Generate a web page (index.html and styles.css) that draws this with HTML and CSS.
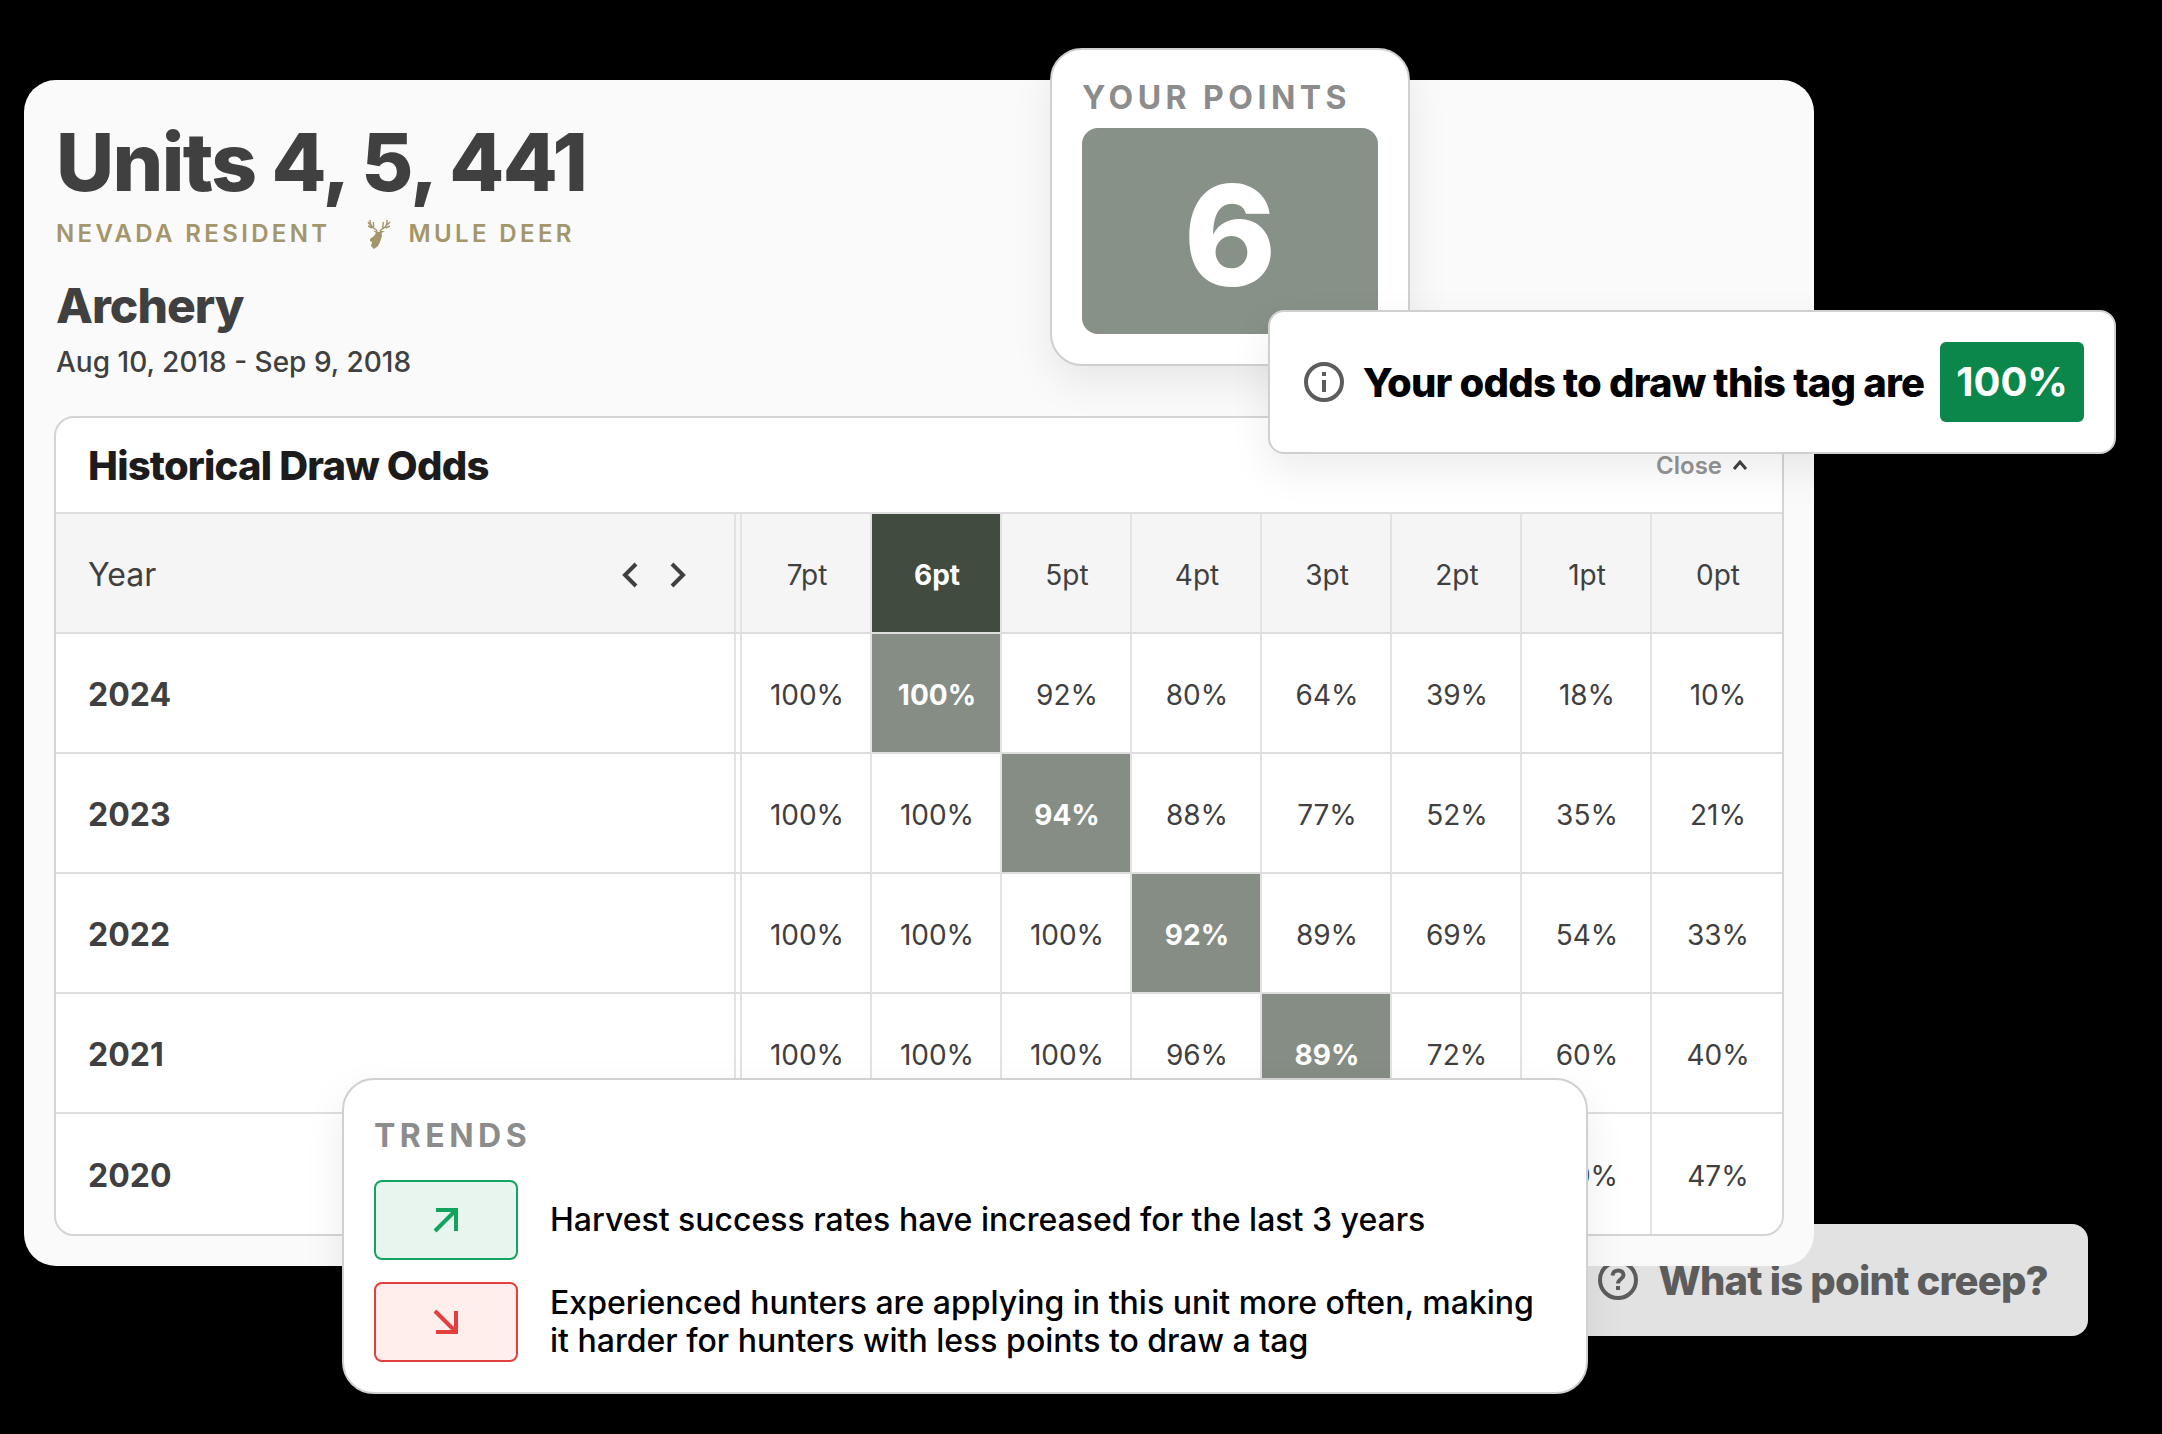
FILE: index.html
```html
<!DOCTYPE html>
<html lang="en">
<head>
    <title>Draw Odds</title>
    <meta charset="UTF-8">
    <meta name="viewport" content="width=device-width, initial-scale=1">
    <link rel="stylesheet" href="styles.css">
</head>

<body>
    <div class="stage">
        <main class="panel">
            <header class="unit-header">
                <h1>Units 4, 5, 441</h1>
                <div class="tags">
                    <span>NEVADA RESIDENT</span>
                    <span class="species">
                        <svg class="deer" viewBox="0 0 24 30" aria-hidden="true">
                            <path class="antler" d="M10 12C9 9 3 10 3 1M4 7L1 3M5 9L1 7M6.500 9.500C7 7 6 5 6.500 3M13 12C14 9 21 10 20 1M20 6L23 3M18.500 9L23 7M16 10C15 7 17 5 16 3"/>
                            <path d="M9 12L6 11.500L9 14L7 17L3 20L3 22L5 23L4 27L7 30L11 27L13 23L15 17L14.500 14L18 12L13.500 12L12 13Z"/>
                        </svg>
                        MULE DEER
                    </span>
                </div>
                <h2>Archery</h2>
                <p>Aug 10, 2018 - Sep 9, 2018</p>
            </header>

            <section class="history">
                <div class="history-head">
                    <h3>Historical Draw Odds</h3>
                    <button type="button" class="close-btn">Close
                        <svg viewBox="0 0 16 12" aria-hidden="true"><path d="M2 10L8 3L14 10"/></svg>
                    </button>
                </div>
                <table>
                    <colgroup>
                        <col>
                        <col class="pt" span="7">
                        <col class="pt-last">
                    </colgroup>
                    <thead>
                        <tr>
                            <th class="year">
                                <div class="year-nav">
                                    <span>Year</span>
                                    <span class="arrows">
                                        <button type="button" aria-label="Previous"><svg viewBox="0 0 18 26"><path d="M15 2L4 13L15 24"/></svg></button>
                                        <button type="button" aria-label="Next"><svg viewBox="0 0 18 26"><path d="M3 2L14 13L3 24"/></svg></button>
                                    </span>
                                </div>
                            </th>
                            <th>7pt</th><th class="active">6pt</th><th>5pt</th><th>4pt</th><th>3pt</th><th>2pt</th><th>1pt</th><th>0pt</th>
                        </tr>
                    </thead>
                    <tbody>
                        <tr>
                            <th class="year">2024</th>
                            <td>100%</td><td class="hit">100%</td><td>92%</td><td>80%</td><td>64%</td><td>39%</td><td>18%</td><td>10%</td>
                        </tr>
                        <tr>
                            <th class="year">2023</th>
                            <td>100%</td><td>100%</td><td class="hit">94%</td><td>88%</td><td>77%</td><td>52%</td><td>35%</td><td>21%</td>
                        </tr>
                        <tr>
                            <th class="year">2022</th>
                            <td>100%</td><td>100%</td><td>100%</td><td class="hit">92%</td><td>89%</td><td>69%</td><td>54%</td><td>33%</td>
                        </tr>
                        <tr>
                            <th class="year">2021</th>
                            <td>100%</td><td>100%</td><td>100%</td><td>96%</td><td class="hit">89%</td><td>72%</td><td>60%</td><td>40%</td>
                        </tr>
                        <tr>
                            <th class="year">2020</th>
                            <td></td><td></td><td></td><td></td><td></td><td></td><td>69%</td><td>47%</td>
                        </tr>
                    </tbody>
                </table>
            </section>
        </main>

        <section class="card points">
            <h4>YOUR POINTS</h4>
            <div class="points-value">6</div>
        </section>

        <section class="card odds">
            <svg class="circle-icon" viewBox="0 0 40 40" aria-hidden="true">
                <circle cx="20" cy="20" r="18"/>
                <path d="M20 18V30M20 10V14"/>
            </svg>
            <span class="odds-text">Your odds to draw this tag are</span>
            <strong>100%</strong>
        </section>

        <section class="card trends">
            <h4>TRENDS</h4>
            <div class="trend">
                <span class="trend-icon up">
                    <svg viewBox="0 0 26 26" aria-hidden="true"><path d="M2 24L23 3M3 3H23V24"/></svg>
                </span>
                <p>Harvest success rates have increased for the last 3 years</p>
            </div>
            <div class="trend">
                <span class="trend-icon down">
                    <svg viewBox="0 0 26 26" aria-hidden="true"><path d="M2 2L23 23M3 23H23V2"/></svg>
                </span>
                <p>Experienced hunters are applying in this unit more often, making it harder for hunters with less points to draw a tag</p>
            </div>
        </section>

        <button type="button" class="creep">
            <svg class="circle-icon" viewBox="0 0 40 40" aria-hidden="true">
                <circle cx="20" cy="20" r="18"/>
                <path d="M14.500 15.500C15 8.500 25.500 9 25.500 15C25.500 19 20 19 20 23.500M20 26V30"/>
            </svg>
            What is point creep?
        </button>
    </div>
</body>
</html>
```
FILE: styles.css
```css
* {
    box-sizing: border-box;
}

body {
    margin: 0;
    background: #000000;
    color: #404040;
    font-family: Inter, "Liberation Sans", sans-serif;
    font-size: 28px;
}

h1, h2, h3, h4, p {
    margin: 0;
}

h1, h2, h3 {
    font-weight: 800;
    letter-spacing: -0.02em;
}

button {
    padding: 0;
    border: none;
    background: transparent;
    color: inherit;
    font-family: inherit;
    cursor: pointer;
}

svg {
    display: block;
    flex: none;
    fill: none;
    stroke: currentColor;
}

.stage {
    position: relative;
    padding: 80px 348px 168px 24px;
}

/* main panel */
.panel {
    position: relative;
    z-index: 1;
    padding: 34px 30px 30px;
    border-radius: 32px;
    background: #fafafa;
}

.unit-header {
    padding-left: 2px;
    margin-bottom: 34px;
}

h1 {
    font-size: 80px;
    line-height: 96px;
}

.tags {
    display: flex;
    gap: 36px;
    margin-top: 8px;
    color: #a3966a;
    font-size: 24px;
    font-weight: 600;
    line-height: 32px;
    letter-spacing: 0.14em;
}

.species {
    display: flex;
    align-items: center;
    gap: 18px;
}

.deer {
    width: 24px;
    height: 30px;
    fill: currentColor;
    stroke: none;
}

.antler {
    fill: none;
    stroke: currentColor;
    stroke-width: 1.4;
}

h2 {
    margin-top: 28px;
    font-size: 48px;
    line-height: 56px;
}

.unit-header p {
    margin-top: 8px;
    font-weight: 500;
    line-height: 40px;
}

/* odds table */
.history {
    overflow: hidden;
    border: 2px solid #d4d4d4;
    border-radius: 20px;
    background: #ffffff;
}

.history-head {
    display: flex;
    align-items: center;
    justify-content: space-between;
    height: 94px;
    padding: 0 34px 0 32px;
}

h3 {
    color: #1c1c1c;
    font-size: 40px;
}

.close-btn {
    display: flex;
    align-items: center;
    gap: 10px;
    color: #949494;
    font-size: 24px;
    font-weight: 600;
}

.close-btn svg {
    width: 16px;
    height: 12px;
    color: #404040;
    stroke-width: 3;
}

table {
    width: 100%;
    table-layout: fixed;
    border-collapse: separate;
    border-spacing: 0;
}

.pt {
    width: 130px;
}

.pt-last {
    width: 132px;
}

th, td {
    height: 120px;
    padding: 3px 0 0 2px;
    border-top: 2px solid #dedede;
    border-left: 2px solid #e2e2e2;
    font-weight: 400;
    text-align: center;
}

tr:last-child td {
    height: 122px;
}

thead th {
    background: #f5f5f5;
}

.year {
    padding-left: 32px;
    border-left: none;
    font-size: 32px;
    font-weight: 700;
    text-align: left;
    box-shadow: inset -4px 0 #ffffff, inset -6px 0 #e2e2e2;
}

thead .year {
    font-weight: 400;
    box-shadow: inset -4px 0 #f5f5f5, inset -6px 0 #e2e2e2;
}

.year-nav {
    display: flex;
    align-items: center;
    justify-content: space-between;
    padding-right: 53px;
}

.arrows {
    display: flex;
    gap: 30px;
}

.arrows svg {
    width: 18px;
    height: 26px;
    stroke-width: 4;
}

thead .active {
    background: #414b40;
    color: #ffffff;
    font-weight: 700;
}

.hit {
    background: #868d85;
    color: #ffffff;
    font-weight: 700;
}

/* floating cards */
.card {
    position: absolute;
    z-index: 2;
    border: 2px solid #d0d0d0;
    border-radius: 32px;
    background: #ffffff;
    box-shadow: 0 16px 40px rgba(0, 0, 0, 0.08);
}

h4 {
    color: #8c8c8c;
    font-size: 32px;
    line-height: 40px;
    letter-spacing: 0.14em;
}

.points {
    top: 48px;
    right: 752px;
    width: 360px;
    padding: 28px 30px 30px;
}

.points-value {
    display: flex;
    align-items: center;
    justify-content: center;
    height: 206px;
    padding-top: 8px;
    margin-top: 10px;
    border-radius: 16px;
    background: #879187;
    color: #ffffff;
    font-size: 140px;
    font-weight: 800;
}

.odds {
    top: 310px;
    right: 46px;
    display: flex;
    align-items: center;
    gap: 16px;
    padding: 30px 30px 30px 34px;
    border-radius: 16px;
    color: #000000;
    font-size: 40px;
    font-weight: 800;
}

.odds-text {
    padding-left: 3px;
    letter-spacing: -0.02em;
}

.odds strong {
    padding: 0 16px;
    border-radius: 6px;
    background: #0b874b;
    color: #ffffff;
    font-weight: 700;
    line-height: 80px;
}

.circle-icon {
    width: 40px;
    height: 40px;
    color: #5c5c5c;
    stroke-width: 4;
}

.trends {
    top: 1078px;
    left: 342px;
    right: 574px;
    padding: 36px 30px 30px;
    color: #000000;
    font-size: 32px;
    font-weight: 500;
    line-height: 38px;
}

.trends h4 {
    margin-bottom: 24px;
}

.trend {
    display: flex;
    align-items: center;
    gap: 32px;
}

.trend + .trend {
    margin-top: 22px;
}

.trend-icon {
    display: flex;
    flex: none;
    align-items: center;
    justify-content: center;
    width: 144px;
    height: 80px;
    border: 2px solid;
    border-radius: 8px;
}

.trend-icon svg {
    width: 26px;
    height: 26px;
    stroke-width: 4;
}

.up {
    background: #e8f5ee;
    color: #12a45e;
}

.down {
    background: #ffeeec;
    color: #e2403c;
}

.creep {
    position: absolute;
    top: 1224px;
    right: 74px;
    display: flex;
    align-items: center;
    gap: 20px;
    height: 112px;
    padding: 0 40px;
    border-radius: 16px;
    background: #e2e2e2;
    color: #5c5c5c;
    font-size: 40px;
    font-weight: 800;
    letter-spacing: -0.02em;
}
```
